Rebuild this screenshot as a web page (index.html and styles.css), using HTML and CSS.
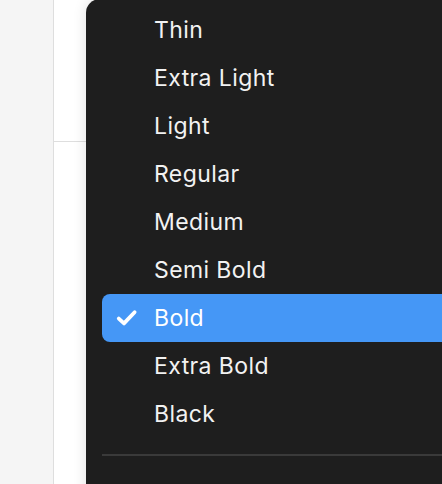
FILE: index.html
```html
<!DOCTYPE html>
<html>
<head>
<meta charset="utf-8">
<link rel="stylesheet" href="styles.css">
</head>
<body>
<div class="app">
  <div class="sidebar"></div>
  <div class="panel">
    <div class="panel-top"></div>
    <div class="panel-rest"></div>
  </div>
</div>
<div class="menu">
  <ul class="items">
    <li class="item">Thin</li>
    <li class="item">Extra Light</li>
    <li class="item">Light</li>
    <li class="item">Regular</li>
    <li class="item">Medium</li>
    <li class="item">Semi Bold</li>
    <li class="item selected">
      <svg class="check" width="22" height="18" viewBox="0 0 22 18"><path d="M2.8 9.6 L8 14.4 L18.6 3.2" fill="none" stroke="#fff" stroke-width="3.8" stroke-linecap="round" stroke-linejoin="round"/></svg>
      Bold
    </li>
    <li class="item">Extra Bold</li>
    <li class="item">Black</li>
  </ul>
  <div class="divider"></div>
</div>
</body>
</html>
```
FILE: styles.css
```css
html, body {
  margin: 0;
  padding: 0;
  height: 100%;
  overflow: hidden;
}
body {
  background: #f5f5f5;
  font-family: Inter, "Noto Sans", sans-serif;
}
.app {
  display: flex;
  height: 484px;
}
.sidebar {
  width: 53px;
  background: #f5f5f5;
  border-right: 1px solid #dedede;
}
.panel {
  flex: 1;
  background: #fff;
  display: flex;
  flex-direction: column;
}
.panel-top {
  height: 141px;
  border-bottom: 1px solid #dedede;
}
.menu {
  position: absolute;
  left: 86px;
  top: -1px;
  width: 400px;
  height: 520px;
  background: #1e1e1e;
  border-radius: 14px;
  box-shadow: 0 0 14px rgba(0, 0, 0, 0.12);
  padding: 7px 0 0 16px;
  box-sizing: border-box;
}
.items {
  list-style: none;
  margin: 0;
  padding: 0;
}
.item {
  height: 48px;
  display: flex;
  align-items: center;
  padding-left: 52px;
  color: #f2f2f2;
  font-size: 23px;
  font-weight: 370;
  letter-spacing: 0.4px;
  position: relative;
  border-radius: 8px;
}
.item.selected {
  background: #4597f6;
  color: #fff;
}
.check {
  position: absolute;
  left: 14px;
  top: 15px;
}
.divider {
  margin-top: 16px;
  height: 2px;
  background: #3a3a3a;
}
```
